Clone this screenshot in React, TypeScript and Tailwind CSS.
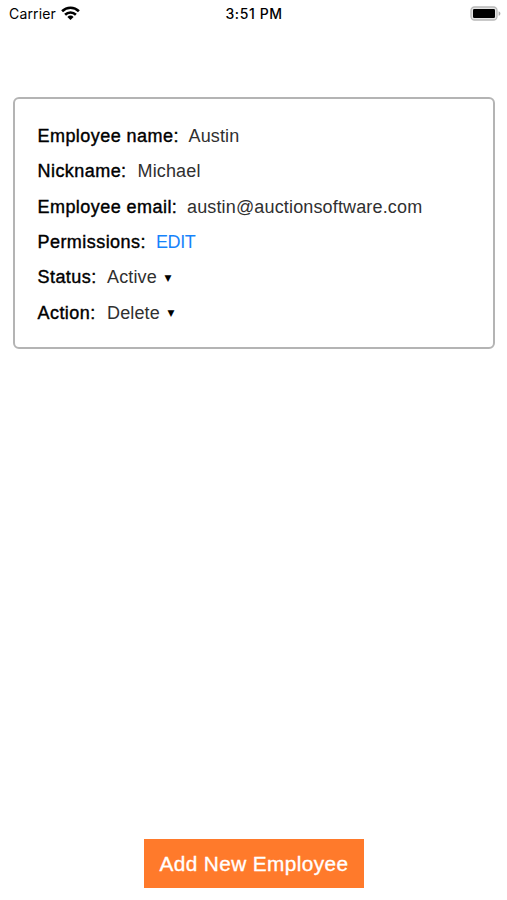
import { ReactNode } from "react";

interface FieldRowProps {
  label: string;
  labelClass: string;
  children: ReactNode;
}

function WifiIcon() {
  return (
    <svg width="19" height="14" viewBox="0 0 19 14" fill="none" stroke="#000" strokeWidth="2.6">
      <path d="M1.1 5.2a12 12 0 0 1 16.8 0" />
      <path d="M4.1 8.7a7.7 7.7 0 0 1 10.8 0" />
      <path d="M9.5 13.9 6.4 10.9a4.3 4.3 0 0 1 6.2 0z" fill="#000" stroke="none" />
    </svg>
  );
}

function BatteryIcon() {
  return (
    <svg width="31" height="15" viewBox="0 0 31 15">
      <rect x="1" y="1" width="26" height="13" rx="3.5" fill="#e4e4e4" stroke="#b8b8b8" strokeWidth="1.3" />
      <rect x="3" y="3" width="22" height="9" rx="1.2" fill="#000" />
      <path d="M28.6 5.2v4.6c1.1-.4 1.8-1.3 1.8-2.3s-.7-1.9-1.8-2.3z" fill="#a8a8a8" />
    </svg>
  );
}

function StatusBar() {
  return (
    <header className="grid h-[26px] grid-cols-3 items-center pl-[9px] pr-[6px] font-[Inter,sans-serif] text-black">
      <div className="flex items-center gap-[5px]">
        <span className="text-[14px] tracking-[0.15px]">Carrier</span>
        <WifiIcon />
      </div>
      <span className="pr-[2px] text-center text-[14px] font-medium tracking-[0.6px]">3:51 PM</span>
      <div className="flex justify-end">
        <BatteryIcon />
      </div>
    </header>
  );
}

function FieldRow({ label, labelClass, children }: FieldRowProps) {
  return (
    <div className="flex h-[35.4px] items-center whitespace-nowrap text-[18px]">
      <dt className={`shrink-0 tracking-[0.45px] text-black [-webkit-text-stroke:0.4px_#000] ${labelClass}`}>
        {label}
      </dt>
      <dd className="flex items-center tracking-[0.15px] text-[#303030]">{children}</dd>
    </div>
  );
}

function Caret() {
  return <span className="ml-[7.5px] mt-[2px] font-['DejaVu_Sans',sans-serif] text-[9px] text-black">▼</span>;
}

export default function App() {
  return (
    <div className="flex h-[900px] w-[507px] flex-col bg-white font-['Liberation_Sans',sans-serif]">
      <StatusBar />
      <main className="mx-[13px] mt-[71px] h-[252px] w-[482px] rounded-[6px] border-2 border-[#b4b4b4] pl-[22.5px] pt-[19.6px]">
        <dl>
          <FieldRow label="Employee name:" labelClass="w-[151px]">
            <span>Austin</span>
          </FieldRow>
          <FieldRow label="Nickname:" labelClass="w-[100px]">
            <span>Michael</span>
          </FieldRow>
          <FieldRow label="Employee email:" labelClass="w-[149.5px]">
            <span>austin@auctionsoftware.com</span>
          </FieldRow>
          <FieldRow label="Permissions:" labelClass="w-[118.5px]">
            <button className="tracking-[-0.4px] text-[#1683fb]">EDIT</button>
          </FieldRow>
          <FieldRow label="Status:" labelClass="w-[69.5px]">
            <span>Active</span>
            <Caret />
          </FieldRow>
          <FieldRow label="Action:" labelClass="w-[69.5px]">
            <span>Delete</span>
            <Caret />
          </FieldRow>
        </dl>
      </main>
      <button className="mb-[12px] ml-[144px] mt-auto h-[49px] w-[220px] whitespace-nowrap bg-[#ff7a2b] text-[20.8px] tracking-[0.4px] text-white [-webkit-text-stroke:0.35px_#fff]">
        Add New Employee
      </button>
    </div>
  );
}
